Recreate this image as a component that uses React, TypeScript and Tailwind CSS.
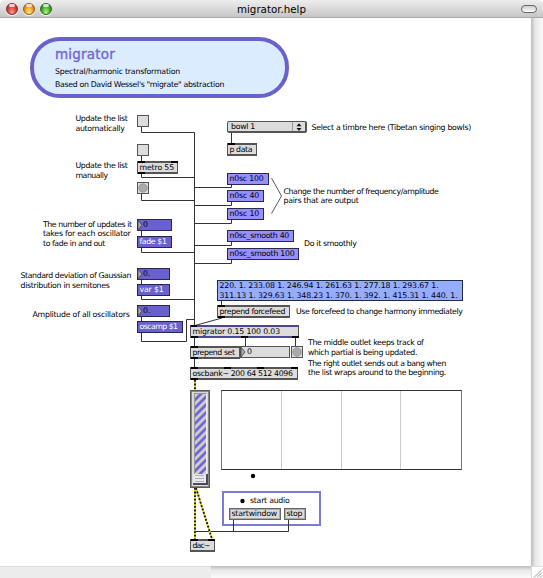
import { useLayoutEffect, useRef, useState, type ReactNode } from "react";
import clsx from "clsx";

const small = "h-[9.6px] text-[7.8px] leading-[12px]";

// A single line of text, tracked so that it fills the width w.
function Line({ t, w, cls = small }: { t: string; w: number; cls?: string }) {
  const ref = useRef<HTMLSpanElement>(null);
  const [spacing, setSpacing] = useState(0);
  useLayoutEffect(() => {
    const natural = ref.current!.getBoundingClientRect().width;
    setSpacing((w - natural) / t.length);
  }, []);
  return (
    <span ref={ref} className={clsx("block w-max whitespace-pre", cls)} style={{ letterSpacing: spacing }}>
      {t}
    </span>
  );
}

// Places an object of the patch on the free canvas.
function Node({ x, y, w, h, cls, children }: { x: number; y: number; w?: number; h?: number; cls?: string; children?: ReactNode }) {
  return (
    <div className={clsx("absolute", cls)} style={{ left: x, top: y, width: w, height: h }}>
      {children}
    </div>
  );
}

type BoxKind = "object" | "purple" | "message" | "wide" | "number" | "numberPurple" | "grey";
type Box = {
  k: BoxKind;
  x: number;
  y: number;
  w: number;
  h: number;
  ports?: number[];
  outs?: number[];
  text?: [string, number][];
};

const boxStyle: Record<BoxKind, string> = {
  object: "border-x border-y-2 border-[#555] bg-[#dcdcdc] pl-[1.5px]",
  purple: "border border-[#29264f] bg-[#6961cf] pl-[1.5px] text-white",
  message: "border border-[#292750] bg-[#958fff] pl-[1.5px]",
  wide: "border border-[#222b4c] bg-[#96adff] pl-[1.5px]",
  number: "border border-[#555] bg-[#dcdcdc] pl-[6px]",
  numberPurple: "border border-[#29264f] bg-[#6961cf] pl-[5px]",
  grey: "border border-[#666] bg-[#dcdcdc] pl-[1.5px] shadow-[inset_0_0_0_1px_#aaa]",
};

const boxes: Box[] = [
  { k: "number", x: 137, y: 115, w: 12, h: 12 },
  { k: "number", x: 137, y: 144, w: 12, h: 12 },
  { k: "object", x: 137, y: 161, w: 41, h: 13, ports: [0, 33], outs: [0], text: [["metro 55", 34.5]] },
  { k: "number", x: 137, y: 182, w: 12, h: 12 },
  { k: "numberPurple", x: 137, y: 219, w: 35, h: 12, text: [["0", 5]] },
  { k: "purple", x: 137, y: 236, w: 35, h: 12, text: [["fade $1", 27]] },
  { k: "numberPurple", x: 137, y: 268, w: 33, h: 12, text: [["0.", 7.5]] },
  { k: "purple", x: 137, y: 284, w: 33, h: 12, text: [["var $1", 24]] },
  { k: "numberPurple", x: 137, y: 305, w: 33, h: 12, text: [["0.", 7.5]] },
  { k: "purple", x: 137, y: 321, w: 46, h: 12, text: [["oscamp $1", 38]] },
  { k: "object", x: 227, y: 143, w: 30, h: 13, ports: [0], text: [["p data", 22.5]] },
  { k: "message", x: 227, y: 173, w: 42, h: 12, text: [["n0sc 100", 34]] },
  { k: "message", x: 227, y: 190, w: 37, h: 12, text: [["n0sc 40", 29.5]] },
  { k: "message", x: 227, y: 208, w: 37, h: 12, text: [["n0sc 10", 29.5]] },
  { k: "message", x: 227, y: 230, w: 67, h: 12, text: [["n0sc_smooth 40", 59.5]] },
  { k: "message", x: 227, y: 248, w: 72, h: 12, text: [["n0sc_smooth 100", 65]] },
  {
    k: "wide",
    x: 217,
    y: 280,
    w: 246,
    h: 21,
    text: [
      ["220. 1. 233.08 1. 246.94 1. 261.63 1. 277.18 1. 293.67 1.", 219],
      ["311.13 1. 329.63 1. 348.23 1. 370. 1. 392. 1. 415.31 1. 440. 1.", 238],
    ],
  },
  { k: "object", x: 217, y: 305, w: 73, h: 13, ports: [0], outs: [0], text: [["prepend forcefeed", 65.5]] },
  { k: "number", x: 240, y: 346, w: 50, h: 12, text: [["0", 5]] },
  { k: "number", x: 291, y: 346, w: 12, h: 12 },
  { k: "object", x: 190, y: 325, w: 109, h: 13, ports: [0], outs: [0, 50, 101], text: [["migrator 0.15 100 0.03", 87.5]] },
  { k: "object", x: 190, y: 346, w: 50, h: 13, ports: [0], outs: [0], text: [["prepend set", 42]] },
  { k: "object", x: 190, y: 367, w: 108, h: 13, ports: [0, 33, 66, 100], outs: [0], text: [["oscbank~ 200 64 512 4096", 100]] },
  { k: "grey", x: 229, y: 508, w: 52, h: 12, text: [["startwindow", 45.5]] },
  { k: "grey", x: 284, y: 508, w: 22, h: 12, text: [["stop", 15.5]] },
  { k: "object", x: 190, y: 539, w: 25, h: 13, ports: [0, 17], text: [["dac~", 17]] },
];

const comments: { x: number; y: number; lines: [string, number][] }[] = [
  { x: 75.5, y: 113, lines: [["Update the list", 52], ["automatically", 49]] },
  { x: 75.5, y: 160, lines: [["Update the list", 52], ["manually", 32]] },
  { x: 43, y: 218.5, lines: [["The number of updates it", 88.5], ["takes for each oscillator", 87.5], ["to fade in and out", 62]] },
  { x: 20.5, y: 270, lines: [["Standard deviation of Gaussian", 110.5], ["distribution in semitones", 89]] },
  { x: 32.5, y: 309, lines: [["Amplitude of all oscillators", 97]] },
  { x: 311.5, y: 122, lines: [["Select a timbre here (Tibetan singing bowls)", 159.5]] },
  { x: 283.5, y: 185.5, lines: [["Change the number of frequency/amplitude", 155], ["pairs that are output", 75]] },
  { x: 304, y: 238, lines: [["Do it smoothly", 52.5]] },
  { x: 296, y: 306, lines: [["Use forcefeed to change harmony immediately", 166.5]] },
  { x: 308, y: 337, lines: [["The middle outlet keeps track of", 115.5], ["which partial is being updated.", 109]] },
  { x: 308, y: 357.5, lines: [["The right outlet sends out a bang when", 138], ["the list wraps around to the beginning.", 138]] },
];

function PatchBox({ b }: { b: Box }) {
  return (
    <Node x={b.x} y={b.y} w={b.w} h={b.h} cls={boxStyle[b.k]}>
      {b.ports?.map((p) => (
        <i key={p} className="absolute -top-[2px] h-[2px] w-[7px] bg-black" style={{ left: p }} />
      ))}
      {b.outs?.map((p) => (
        <i key={p} className="absolute -bottom-[2px] h-[2px] w-[7px] bg-black" style={{ left: p }} />
      ))}
      <div className="-mt-px flex flex-col">
        {b.text?.map(([t, w]) => (
          <Line key={t} t={t} w={w} />
        ))}
      </div>
    </Node>
  );
}

const wires = [
  "M141.5 127V132.5H194.5V325",
  "M141.5 156V161",
  "M141.5 174V177.5H194.5",
  "M141.5 194V200.5H194.5",
  "M141.5 231V236M141.5 248V252.5H194.5",
  "M141.5 280V284M141.5 296V299.5H194.5",
  "M141.5 317V321M141.5 333V341.5H186.5V319.5H194.5",
  "M231.5 133V143",
  "M231.5 185V187.5H194.5M231.5 202V205.5H194.5M231.5 220V223.5H194.5",
  "M231.5 242V245.5H194.5M231.5 260V263.5H194.5",
  "M221.5 301V305",
  "M194.5 338V346M194.5 359V367M245.5 338V346M295.5 338V346",
  "M233.5 520V531.5M288.5 520V531.5H195",
];

function Cords() {
  return (
    <svg className="absolute left-0 top-0" width="531" height="566" fill="none">
      <path d={wires.join("")} stroke="#333" strokeWidth="1" />
      <path d="M222 318L195 325.5" stroke="#333" />
      <path d="M271.5 178L281.5 196L271.5 213.5" stroke="#444" strokeWidth=".9" />
      {["M195 380V390", "M195 488V539", "M196 488L212 539"].map((d) => (
        <g key={d}>
          <path d={d} stroke="#e2d51c" strokeWidth="1.8" />
          <path d={d} stroke="#111" strokeWidth="1.8" strokeDasharray="1.8 1.8" />
        </g>
      ))}
    </svg>
  );
}

// Glyphs painted above the boxes: bang circles, number-box arrows and dots.
function Marks() {
  return (
    <svg className="absolute left-0 top-0" width="531" height="566">
      <circle cx="143" cy="188" r="4.2" fill="#aaa" stroke="#888" strokeWidth=".7" />
      <circle cx="297" cy="352" r="4.2" fill="#aaa" stroke="#888" strokeWidth=".7" />
      {[
        [138, 220],
        [138, 269],
        [138, 306],
        [241, 347],
      ].map(([x, y]) => (
        <path key={`${x}-${y}`} d={`M${x} ${y}l4 5l-4 5z`} fill="#aaa" stroke="#444" strokeWidth=".8" />
      ))}
      <circle cx="253" cy="476" r="2.2" fill="#000" />
      <circle cx="242.5" cy="501" r="2.2" fill="#000" />
      <path d="M296.5 126.3L299 123.2L301.5 126.3zM296.5 128L299 131.1L301.5 128z" fill="#111" />
    </svg>
  );
}

function Slider() {
  return (
    <Node x={190} y={390} w={20} h={98} cls="flex flex-col items-center border border-[#5a5a5a] bg-[#dadada] pt-[2px] shadow-[inset_0_0_0_1px_#888]">
      <svg width="13" height="81">
        <defs>
          <pattern id="stripe" width="13" height="7.9" patternUnits="userSpaceOnUse">
            <path d="M-2 2L14 -14M-2 9.9L14 -6.1M-2 17.8L14 1.8M-2 25.7L14 9.7" stroke="#6c64d5" strokeWidth="2.7" />
          </pattern>
        </defs>
        <rect width="13" height="81" fill="#cfcfcf" />
        <rect width="12.3" height="81" fill="url(#stripe)" />
        <path d="M.5 81V.5H12.5" stroke="#999" fill="none" />
        <path d="M12.5 1V81" stroke="#eee" />
      </svg>
      <div className="flex h-[11px] w-[15px] flex-col justify-center gap-[2px] border-b-2 border-r-2 border-[#4b4b5a] bg-[#e8e8ea] px-[2px]">
        <i className="h-px bg-[#b0b0b0]" />
        <i className="h-px bg-[#b0b0b0]" />
        <i className="h-px bg-[#b0b0b0]" />
      </div>
    </Node>
  );
}

function Light({ tone }: { tone: string }) {
  return (
    <span className={clsx("flex size-[12px] justify-center rounded-full border shadow-[0_1px_1px_#fff]", tone)}>
      <i className="h-[3px] w-[6px] rounded-full bg-white/75" />
    </span>
  );
}

function TitleBar() {
  return (
    <header className="flex h-[18px] shrink-0 items-center rounded-t-[5px] border-b border-[#aaa] bg-linear-to-b from-[#eee] to-[#c6c6c6] px-[6px]">
      <div className="flex flex-1 gap-[5px]">
        <Light tone="border-[#7d3030] bg-radial-[at_50%_85%] from-[#ff9a94] via-[#e04842] to-[#9f1f20]" />
        <Light tone="border-[#93601c] bg-radial-[at_50%_85%] from-[#ffec83] via-[#f3a52a] to-[#ae5d0e]" />
        <Light tone="border-[#2e6a22] bg-radial-[at_50%_85%] from-[#b6f584] via-[#4cb434] to-[#1d6416]" />
      </div>
      <Line t="migrator.help" w={69} cls="text-[10.3px] leading-[16px] text-black" />
      <div className="flex flex-1 justify-end">
        <span className="h-[8px] w-[16px] rounded-full border-[1.5px] border-[#666] bg-linear-to-b from-[#ccc] to-white" />
      </div>
    </header>
  );
}

function Banner() {
  return (
    <Node x={30} y={37} w={259} h={61} cls="flex flex-col gap-[3px] rounded-[30px] border-4 border-[#6961cf] bg-[#dcecff] pl-[21px] pt-[5px]">
      <Line t="migrator" w={60} cls="text-[13.5px] leading-[17px] text-[#7468d8] [-webkit-text-stroke:0.4px_#7468d8]" />
      <Line t="Spectral/harmonic transformation" w={125} />
      <Line t={'Based on David Wessel\'s "migrate" abstraction'} w={169} />
    </Node>
  );
}

export default function App() {
  return (
    <div className="flex h-[578px] w-[543px] flex-col overflow-hidden bg-white font-['DejaVu_Sans',sans-serif] text-black">
      <TitleBar />
      <div className="flex min-h-0 flex-1">
        <main className="relative flex-1">
          <div className="absolute -top-[18px] left-0 h-[566px] w-[522px]">
            <Banner />
            <Node x={222} y={491} w={99} h={35} cls="flex border-2 border-[#7c79d8] pl-[26px] pt-[2px]">
              <Line t="start audio" w={39.5} />
            </Node>
            <Cords />
            {boxes.map((b) => (
              <PatchBox key={`${b.x}-${b.y}`} b={b} />
            ))}
            <Node x={197} y={325} w={101} h={2} cls="bg-[#4b4893]" />
            <Node x={198} y={336} w={42} h={2} cls="bg-[#4b4893]" />
            <Node x={248} y={336} w={43} h={2} cls="bg-[#4b4893]" />
            <Node x={227} y={121} w={80} h={12} cls="flex justify-between rounded-[2px] border border-b-2 border-r-2 border-[#555] bg-[#dcdcdc] pl-[3px] pr-[12px]">
              <div className="-mt-px">
                <Line t="bowl 1" w={24} />
              </div>
              <i className="h-[9px] w-px bg-[#999]" />
            </Node>
            <Slider />
            <Node x={221} y={390} w={241} h={80} cls="grid grid-cols-4 divide-x-[1.5px] divide-[#ccc] border border-x-[#777] border-y-[#333]">
              <i />
              <i />
              <i />
              <i />
            </Node>
            <Marks />
            {comments.map((c) => (
              <Node key={c.y} x={c.x} y={c.y} cls="flex flex-col">
                {c.lines.map(([t, w]) => (
                  <Line key={t} t={t} w={w} />
                ))}
              </Node>
            ))}
          </div>
        </main>
        <aside className="w-[12px] bg-linear-to-r from-[#bdbdbd] via-[#e8e8e8] via-35% to-[#fafafa]" />
      </div>
      <footer className="flex h-[12px] shrink-0">
        <div className="w-[211px] border-t border-[#dedede] bg-[#ececec]" />
        <div className="flex-1 bg-linear-to-b from-[#bdbdbd] via-[#e8e8e8] via-35% to-[#fafafa]" />
        <svg className="border-l border-t border-[#ddd] bg-white" width="12" height="12">
          <path d="M2 10.5L10 2.5M5 10.5L10 5.5M8 10.5L10 8.5" stroke="#999" />
        </svg>
      </footer>
    </div>
  );
}
